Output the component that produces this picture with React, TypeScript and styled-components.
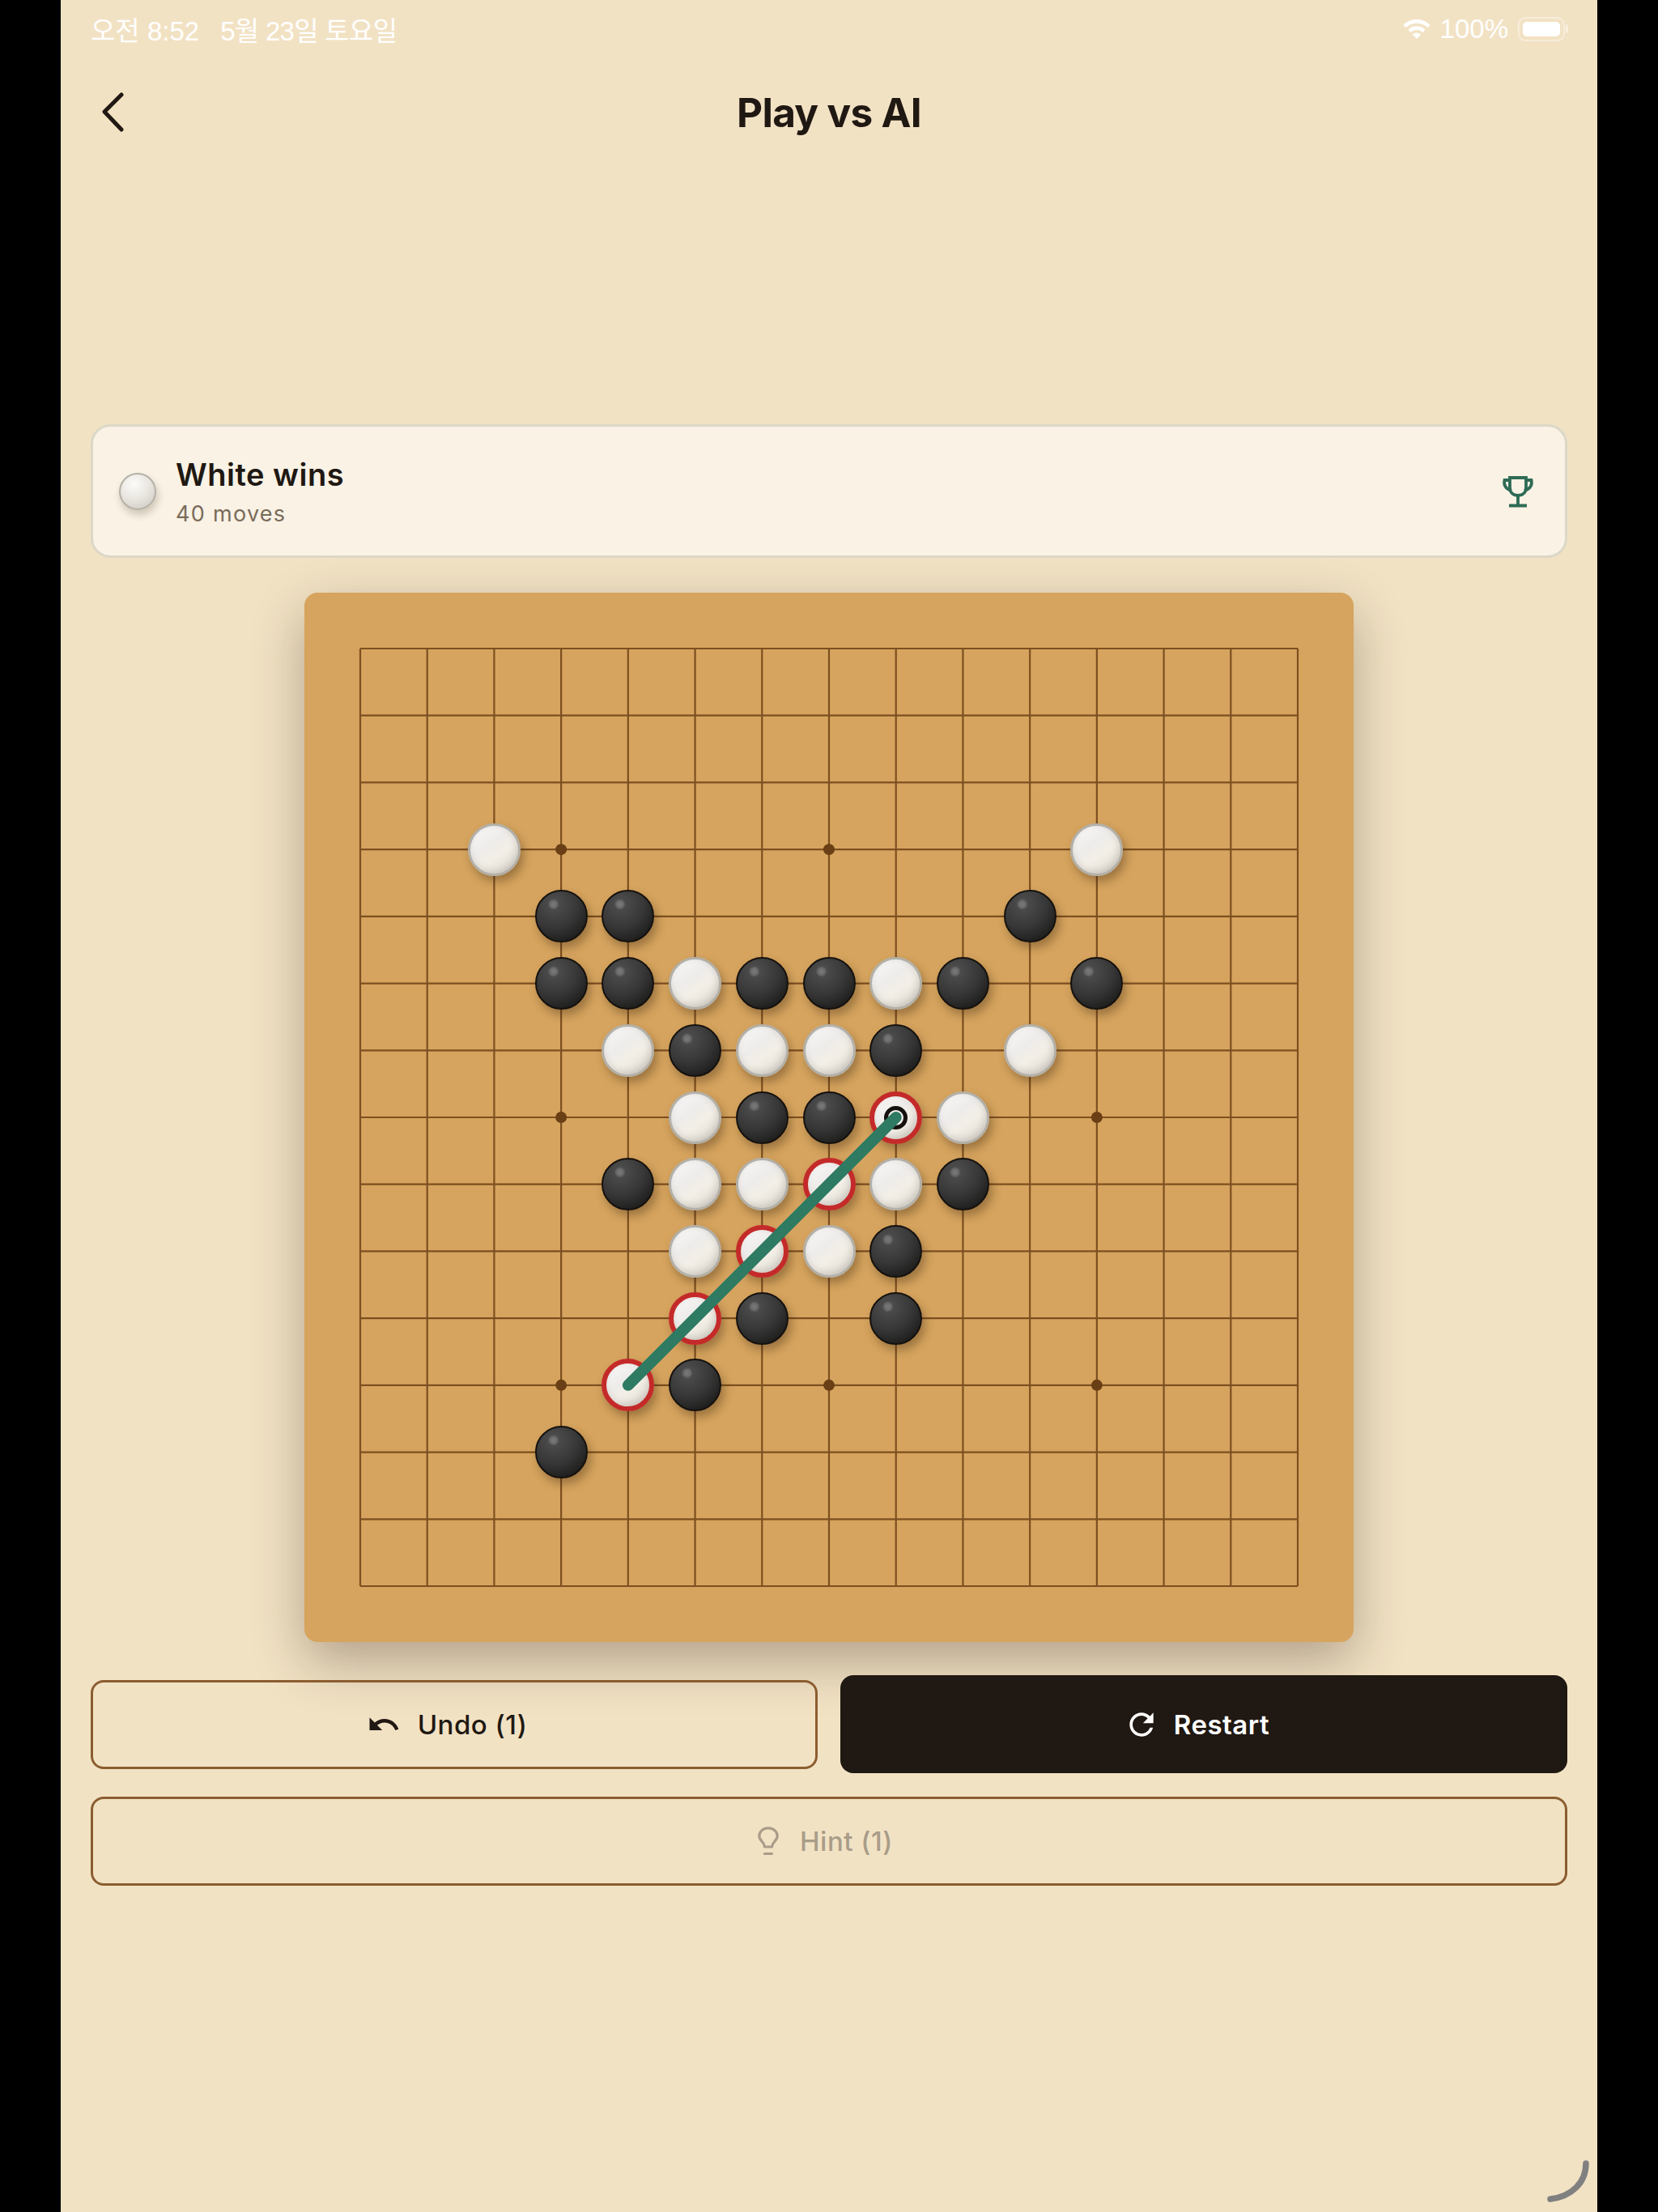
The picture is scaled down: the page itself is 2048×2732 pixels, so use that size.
import React from 'react';
import styled, { createGlobalStyle } from 'styled-components';

const CELL = 1158 / 14;

const rows = [
    '...............',
    '...............',
    '...............',
    '..W........W...',
    '...BB.....B....',
    '...BBWBBWB.B...',
    '....WBWWB.W....',
    '.....WBBLW.....',
    '....BWWRWB.....',
    '.....WRWB......',
    '.....RB.B......',
    '....RB.........',
    '...B...........',
    '...............',
    '...............',
];

const starPoints = [
    [3, 3],
    [7, 3],
    [11, 3],
    [3, 7],
    [7, 7],
    [11, 7],
    [3, 11],
    [7, 11],
    [11, 11],
];

const GlobalStyle = createGlobalStyle`
    html, body {
        margin: 0;
        padding: 0;
        background: #000;
    }
    * {
        box-sizing: border-box;
    }
`;

const Page = styled.div`
    position: relative;
    width: 1898px;
    height: 2732px;
    margin: 0 auto;
    padding: 0 37px;
    overflow: hidden;
    background: #f2e2c4;
    color: #201812;
    font-family: Inter, 'Noto Sans CJK KR', sans-serif;
`;

const StatusBar = styled.div`
    height: 72px;
    display: flex;
    align-items: center;
    justify-content: space-between;
    color: #fff;
    font-size: 33px;
    font-family: 'Liberation Sans', 'Noto Sans CJK KR', sans-serif;
`;

const StatusGroup = styled.div`
    display: flex;
    align-items: center;
    gap: 26px;
`;

const StatusDate = styled.span`
    letter-spacing: -0.7px;
`;

const StatusRight = styled(StatusGroup)`
    gap: 12px;
`;

const Battery = styled.div`
    position: relative;
    width: 58px;
    height: 30px;
    padding: 4px;
    border: 2px solid rgba(255, 255, 255, 0.4);
    border-radius: 9px;
    margin-right: 3px;
    &::before {
        content: '';
        display: block;
        height: 100%;
        background: #fff;
        border-radius: 5px;
    }
    &::after {
        content: '';
        position: absolute;
        right: -6px;
        top: 7px;
        width: 3px;
        height: 11px;
        background: rgba(255, 255, 255, 0.45);
        border-radius: 0 3px 3px 0;
    }
`;

const Header = styled.div`
    height: 134px;
    display: grid;
    grid-template-columns: 1fr auto 1fr;
    align-items: center;
`;

const BackButton = styled.div`
    padding: 0 0 2px 13px;
    display: flex;
`;

const Title = styled.div`
    font-size: 49.5px;
    font-weight: 700;
    letter-spacing: -0.7px;
`;

const ResultCard = styled.div`
    margin-top: 318px;
    height: 165px;
    display: flex;
    align-items: center;
    padding: 0 38px 0 32px;
    background: #f9f2e5;
    border: 3px solid #dbd8c7;
    border-radius: 24px;
`;

const ResultStone = styled.div`
    width: 46px;
    height: 46px;
    border-radius: 50%;
    border: 2px solid #b5b1a7;
    background: radial-gradient(circle at 40% 28%, #fbfbf9 0%, #e9e6e0 48%, #c9c5bc 100%);
    box-shadow: 2px 6px 10px rgba(60, 40, 20, 0.22);
`;

const ResultText = styled.div`
    flex: 1;
    margin-left: 24px;
`;

const ResultTitle = styled.div`
    font-size: 38px;
    font-weight: 600;
    letter-spacing: 0.5px;
    line-height: 46px;
    padding-top: 2px;
`;

const ResultMeta = styled.div`
    margin-top: 9px;
    font-size: 27px;
    line-height: 34px;
    letter-spacing: 1.3px;
    color: #7a6b5a;
`;

const Board = styled.div`
    width: 1296px;
    height: 1296px;
    margin: 43px auto 0;
    padding: 69px;
    background: #d6a45e;
    border-radius: 16px;
    box-shadow: 0 24px 64px rgba(44, 24, 16, 0.32);
`;

const BoardArea = styled.div`
    position: relative;
    width: 1158px;
    height: 1158px;
`;

const BoardLayer = styled.svg`
    position: absolute;
    left: 0;
    top: 0;
    overflow: visible;
`;

const Stone = styled.div<{ $color: 'black' | 'white'; $win: boolean }>`
    position: absolute;
    width: 65px;
    height: 65px;
    margin: -32.5px 0 0 -32.5px;
    border-radius: 50%;
    border: ${(p) =>
        p.$win ? '6px solid #c42a2a' : p.$color === 'white' ? '3px solid #b3b0a8' : '2px solid #15110e'};
    background: ${(p) =>
        p.$color === 'white'
            ? 'linear-gradient(145deg, #f9f9f8 0%, #eeecea 40%, #f3efe7 60%, #dbd8d1 100%)'
            : 'radial-gradient(circle at 34% 26%, #7a7a7a 0, #6c6c6c 4px, transparent 7px), radial-gradient(circle at 35% 25%, #505050 0%, #373737 48%, #161514 92%)'};
    box-shadow: ${(p) =>
        p.$color === 'white'
            ? 'inset -2px -3px 8px rgba(90, 80, 70, 0.2), 4px 7px 12px rgba(50, 28, 8, 0.35)'
            : '4px 7px 12px rgba(50, 28, 8, 0.35)'};
`;

const LastMark = styled.div`
    position: absolute;
    left: 50%;
    top: 50%;
    width: 29px;
    height: 29px;
    margin: -14.5px 0 0 -14.5px;
    border-radius: 50%;
    border: 5px solid #15110e;
    background: #f4f2ee;
`;

const Actions = styled.div`
    margin-top: 41px;
    display: grid;
    grid-template-columns: 1fr 1fr;
    align-items: center;
    gap: 28px;
`;

const ActionButton = styled.div<{ $primary?: boolean; $disabled?: boolean }>`
    height: ${(p) => (p.$primary ? '121px' : '110px')};
    display: flex;
    align-items: center;
    justify-content: center;
    gap: ${(p) => (p.$primary ? '18px' : p.$disabled ? '26px' : '21px')};
    padding-right: ${(p) => (p.$disabled ? '9px' : '18px')};
    border-radius: 16px;
    font-size: 33px;
    font-weight: ${(p) => (p.$primary ? 600 : 500)};
    letter-spacing: 0.5px;
    background: ${(p) => (p.$primary ? '#201812' : 'transparent')};
    border: ${(p) => (p.$primary ? 'none' : '3px solid #8b5d30')};
    color: ${(p) => (p.$primary ? '#fff' : p.$disabled ? '#a99c89' : '#201812')};
`;

const HintRow = styled.div`
    margin-top: 29px;
    display: grid;
`;

const CornerArc = styled.svg`
    position: absolute;
    right: 0;
    bottom: 0;
`;

const BackIcon = () => (
    <svg width="30" height="50" viewBox="0 0 30 50" fill="none">
        <path d="M25 4L4 25l21 22" stroke="#201812" strokeWidth="5" strokeLinecap="round" strokeLinejoin="round" />
    </svg>
);

const WifiIcon = () => (
    <svg width="34" height="24" viewBox="0 0 36 26" fill="#fff">
        <path d="M18 0C11 0 5 2.700 0 7.300l3.400 3.700C7.300 7.400 12.400 5.200 18 5.200s10.700 2.200 14.600 5.800L36 7.300C31 2.700 25 0 18 0z" />
        <path d="M18 9c-4.500 0-8.500 1.700-11.500 4.600l3.500 3.700c2.100-2 4.900-3.200 8-3.200s5.900 1.200 8 3.200l3.500-3.700C26.500 10.700 22.500 9 18 9z" />
        <path d="M18 18c-2.200 0-4.100.800-5.600 2.200L18 26l5.600-5.800C22.100 18.800 20.200 18 18 18z" />
    </svg>
);

const TrophyIcon = () => (
    <svg width="40" height="40" viewBox="0 0 40 40" fill="none" stroke="#2e6b55" strokeWidth="3.800">
        <path d="M10 3h20v12c0 6-4 10-10 10S10 21 10 15V3z" />
        <path d="M10 6H3.500c-1.500 6 1.500 11 8.500 13M30 6h6.500c1.500 6-1.500 11-8.500 13" />
        <path d="M20 25v12M9 37.500h22" />
    </svg>
);

const UndoIcon = () => (
    <svg width="42" height="42" viewBox="0 0 24 24" fill="#201812">
        <path d="M12.500 8c-2.650 0-5.050.990-6.900 2.600L2 7v9h9l-3.620-3.620c1.390-1.160 3.160-1.880 5.120-1.880 3.540 0 6.550 2.310 7.600 5.500l2.370-.780C21.080 11.030 17.150 8 12.500 8z" />
    </svg>
);

const RestartIcon = () => (
    <svg width="44" height="44" viewBox="0 0 24 24" fill="#fff">
        <path d="M17.650 6.350C16.200 4.900 14.210 4 12 4c-4.420 0-7.990 3.580-7.990 8s3.570 8 7.990 8c3.730 0 6.840-2.550 7.730-6h-2.080c-.820 2.330-3.040 4-5.650 4-3.310 0-6-2.690-6-6s2.690-6 6-6c1.660 0 3.140.690 4.220 1.780L13 11h7V4l-2.350 2.350z" />
    </svg>
);

const HintIcon = () => (
    <svg width="26" height="36" viewBox="0 0 26 36" fill="none" stroke="#a99c89" strokeWidth="3.200" strokeLinecap="round" strokeLinejoin="round">
        <path d="M8.500 25c0-3-1-4.200-3.200-6.500C3 16.200 1.800 14 1.800 11.600 1.800 6 6.800 1.800 13 1.800s11.200 4.200 11.200 9.800c0 2.400-1.200 4.600-3.500 6.900-2.200 2.300-3.200 3.500-3.200 6.500h-9z" />
        <path d="M8.500 33.500h9" />
    </svg>
);

const App = () => {
    return (
        <Page>
            <GlobalStyle />
            <StatusBar>
                <StatusGroup>
                    <span>오전 8:52</span>
                    <StatusDate>5월 23일 토요일</StatusDate>
                </StatusGroup>
                <StatusRight>
                    <WifiIcon />
                    <span>100%</span>
                    <Battery />
                </StatusRight>
            </StatusBar>
            <Header>
                <BackButton>
                    <BackIcon />
                </BackButton>
                <Title>Play vs AI</Title>
            </Header>
            <ResultCard>
                <ResultStone />
                <ResultText>
                    <ResultTitle>White wins</ResultTitle>
                    <ResultMeta>40 moves</ResultMeta>
                </ResultText>
                <TrophyIcon />
            </ResultCard>
            <Board>
                <BoardArea>
                    <BoardLayer width="1158" height="1158">
                        {Array.from({ length: 15 }).map((_, i) => (
                            <g key={i} stroke="#7d4f20" strokeWidth="2.200">
                                <line x1={i * CELL} y1="0" x2={i * CELL} y2="1158" />
                                <line x1="0" y1={i * CELL} x2="1158" y2={i * CELL} />
                            </g>
                        ))}
                        {starPoints.map(([c, r]) => (
                            <circle key={`${c}-${r}`} cx={c * CELL} cy={r * CELL} r="7" fill="#6a3f15" />
                        ))}
                    </BoardLayer>
                    {rows.map((row, r) =>
                        row.split('').map((ch, c) => {
                            if (ch === '.') return null;
                            const color = ch === 'B' ? 'black' : 'white';
                            return (
                                <Stone
                                    key={`${r}-${c}`}
                                    $color={color}
                                    $win={ch === 'R' || ch === 'L'}
                                    style={{ left: c * CELL, top: r * CELL }}
                                >
                                    {ch === 'L' && <LastMark />}
                                </Stone>
                            );
                        })
                    )}
                    <BoardLayer width="1158" height="1158">
                        <line
                            x1={8 * CELL}
                            y1={7 * CELL}
                            x2={4 * CELL}
                            y2={11 * CELL}
                            stroke="#2e7a62"
                            strokeWidth="14"
                            strokeLinecap="round"
                        />
                    </BoardLayer>
                </BoardArea>
            </Board>
            <Actions>
                <ActionButton>
                    <UndoIcon />
                    <span>Undo (1)</span>
                </ActionButton>
                <ActionButton $primary>
                    <RestartIcon />
                    <span>Restart</span>
                </ActionButton>
            </Actions>
            <HintRow>
                <ActionButton $disabled>
                    <HintIcon />
                    <span>Hint (1)</span>
                </ActionButton>
            </HintRow>
            <CornerArc width="70" height="80" viewBox="0 0 70 80" fill="none">
                <path d="M56 20C56 44 38 61 12 64" stroke="#808080" strokeWidth="7.500" strokeLinecap="round" />
            </CornerArc>
        </Page>
    );
};

export default App;
